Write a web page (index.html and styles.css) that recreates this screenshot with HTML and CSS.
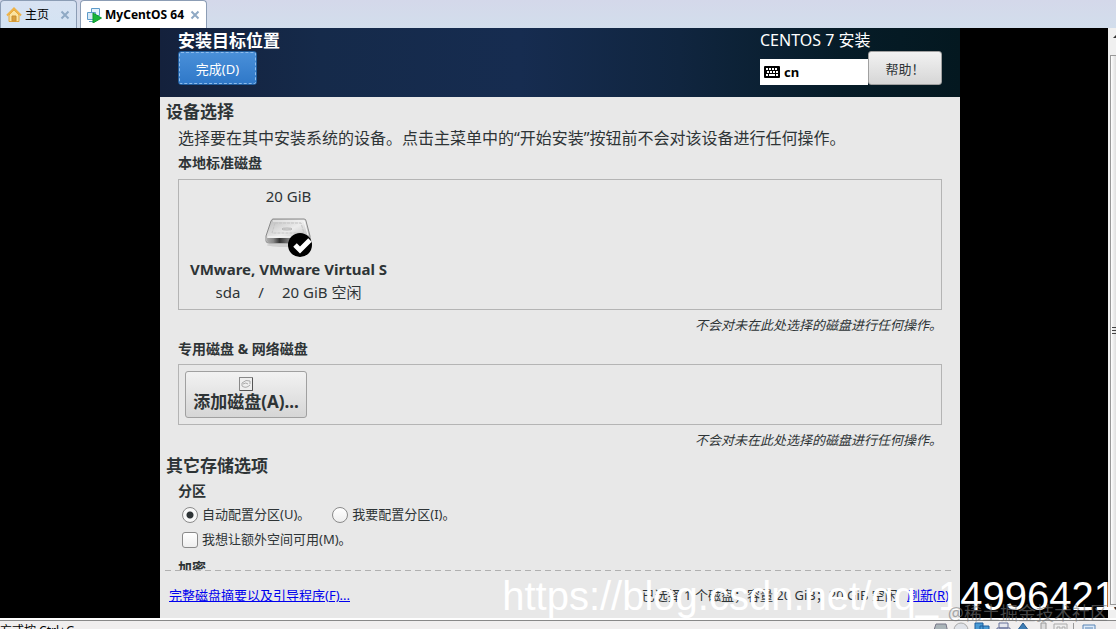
FILE: index.html
```html
<!DOCTYPE html>
<html lang="zh-CN">
  <head>
    <meta charset="UTF-8" />
    <title>MyCentOS 64</title>
    <link rel="stylesheet" href="styles.css">
  </head>
  <body>
    <nav class="tabs">
      <div class="tab">
        <svg class="tab-icon" width="16" height="16" viewBox="0 0 16 16">
          <path d="M3 8v6.500h10V8L8 3z" fill="#fbe3a0" stroke="#e0a63c" />
          <path d="M1 8.500 8 1.500l7 7" fill="none" stroke="#efb348" stroke-width="2" />
          <path d="M6 9h4v5H6z" fill="#d9a040" stroke="#c98f30" />
        </svg>
        <a class="tab-name" href="#home">主页</a>
        <button class="tab-close" aria-label="关闭">
          <svg width="10" height="10" viewBox="0 0 10 10"><path d="m1.500 1.500 7 7m0-7-7 7" stroke="#8fa9c4" stroke-width="2" /></svg>
        </button>
      </div>
      <div class="tab active">
        <svg class="tab-icon" width="16" height="16" viewBox="0 0 16 16">
          <path d="M5.500 1.500h8v7h-8z" fill="#e4f1fb" stroke="#5d9bc9" />
          <path d="M1.500 5.500h8v7h-8zM3 14.500h5" fill="#d5e9f8" stroke="#5d9bc9" />
          <path d="m7 6 8.500 5L7 16z" fill="#18b53a" stroke="#0d9a2c" />
        </svg>
        <a class="tab-name" href="#mycentos">MyCentOS 64</a>
        <button class="tab-close" aria-label="关闭">
          <svg width="10" height="10" viewBox="0 0 10 10"><path d="m1.500 1.500 7 7m0-7-7 7" stroke="#8fa9c4" stroke-width="2" /></svg>
        </button>
      </div>
    </nav>

    <div class="screen">
      <main class="installer">
        <header class="header">
          <div class="header-left">
            <h1>安装目标位置</h1>
            <button class="btn btn-done">完成(D)</button>
          </div>
          <div class="header-right">
            <p class="product">CENTOS 7 安装</p>
            <div class="header-tools">
              <button class="keyboard">
                <svg width="16" height="12" viewBox="0 0 16 12">
                  <rect width="16" height="12" rx="1" fill="#000" />
                  <path d="M2 3h12M3 6h11" stroke="#fff" stroke-width="2" stroke-dasharray="2 1" />
                  <path d="M2 9h2m1 0h6m1 0h2" stroke="#fff" stroke-width="2" />
                </svg>
                cn
              </button>
              <button class="btn btn-help">帮助！</button>
            </div>
          </div>
        </header>

        <div class="content">
          <h2>设备选择</h2>
          <div class="section">
            <p class="intro">选择要在其中安装系统的设备。点击主菜单中的“开始安装”按钮前不会对该设备进行任何操作。</p>
            <h3>本地标准磁盘</h3>
            <div class="disk-box">
              <div class="disk">
                <span class="disk-size">20 GiB</span>
                <svg width="48" height="48" viewBox="0 0 48 48">
                  <defs>
                    <linearGradient id="top" x1="0" y1="0" x2="1" y2="1">
                      <stop offset="0" stop-color="#b8b8b8" />
                      <stop offset="0.500" stop-color="#ececec" />
                      <stop offset="1" stop-color="#b0b0b0" />
                    </linearGradient>
                    <linearGradient id="front" x1="0" x2="1">
                      <stop offset="0" stop-color="#aaa" />
                      <stop offset="0.150" stop-color="#888" />
                      <stop offset="0.300" stop-color="#333" />
                      <stop offset="0.600" stop-color="#999" />
                      <stop offset="1" stop-color="#aaa" />
                    </linearGradient>
                  </defs>
                  <ellipse cx="23" cy="36" rx="21" ry="2" fill="#cfcfcf" />
                  <path d="M8 10h31q2 0 2 2l4 15v4q0 3-2 3H4q-3 0-3-2v-5l5-15q1-2 2-2z" fill="url(#top)" stroke="#888" />
                  <path d="M2 29h42v3q0 2-2 2H4q-2 0-2-2z" fill="url(#front)" />
                  <path d="M3 28h40M8 12h31l4 14" fill="none" stroke="#f8f8f8" />
                  <path d="M10 14h26l3 10H7z" fill="none" stroke="#c4c4c4" stroke-dasharray="3 1" />
                  <ellipse cx="22" cy="20" rx="5" ry="1" fill="#ddd" stroke="#b4b4b4" />
                  <circle cx="35" cy="36" r="12" fill="#000" />
                  <path d="m30 36 5 5 10-10" fill="none" stroke="#fff" stroke-width="5" />
                </svg>
                <strong class="disk-name">VMware, VMware Virtual S</strong>
                <div class="disk-info">
                  <span>sda</span>
                  <span>/</span>
                  <span>20 GiB 空闲</span>
                </div>
              </div>
            </div>
            <p class="note">不会对未在此处选择的磁盘进行任何操作。</p>
            <h3>专用磁盘 &amp; 网络磁盘</h3>
            <div class="disk-box special">
              <button class="btn btn-add">
                <svg width="14" height="14" viewBox="0 0 14 14">
                  <rect x="0.500" y="0.500" width="13" height="13" fill="#eee" stroke="#888" />
                  <path d="M1 13.500h12.500V1" fill="none" stroke="#555" />
                  <path d="M3 9V6q4-4 8-2v3M3 9q4 3 8-1M4 7q3-2 5 0" fill="none" stroke="#aaa" />
                </svg>
                添加磁盘(A)...
              </button>
            </div>
            <p class="note">不会对未在此处选择的磁盘进行任何操作。</p>
          </div>

          <h2>其它存储选项</h2>
          <div class="section">
            <h3 class="partition">分区</h3>
            <div class="options">
              <label><input type="radio" name="partition" checked />自动配置分区(U)。</label>
              <label><input type="radio" name="partition" />我要配置分区(I)。</label>
            </div>
            <div class="options">
              <label><input type="checkbox" />我想让额外空间可用(M)。</label>
            </div>
            <h3 class="encrypt">加密</h3>
          </div>
        </div>

        <footer class="footer">
          <a href="#summary">完整磁盘摘要以及引导程序(F)...</a>
          <p class="selected">已选择 1 个磁盘；容量 20 GiB；20 GiB 空闲 <a href="#refresh">刷新(R)</a></p>
        </footer>
      </main>
      <div class="scrollbar">
        <svg class="scroll-arrow" width="8" height="6" viewBox="0 0 8 6"><path d="m5 4 3-3v3z" fill="#333" /></svg>
        <div class="scroll-thumb">
          <svg width="4" height="9" viewBox="0 0 4 9"><path d="M0 1.500h4M0 4.500h4M0 7.500h4" stroke="#444" /></svg>
        </div>
        <svg class="scroll-arrow" width="8" height="6" viewBox="0 0 8 6"><path d="m5 1 3 3V1z" fill="#333" /></svg>
      </div>
    </div>

    <div class="statusbar">
      <span class="status-text">方式按 Ctrl+G。</span>
      <svg class="status-icons" width="184" height="16" viewBox="0 0 184 16">
        <path d="M4 3h10l2 9H1z" fill="#aab4b8" stroke="#778" />
        <circle cx="29" cy="9" r="7" fill="#dfe2e8" stroke="#aaa" />
        <path d="M43 2h8v8h-8zM48 5h9v9h-9z" fill="#4a9ad4" stroke="#1d5d9c" />
        <path d="M67 2h9v5h-9zM65 7h13v7H65z" fill="#e4e6ee" stroke="#667099" />
        <path d="m91 2 6 8H85z" fill="#3d7db5" stroke="#24598c" />
        <path d="M109 2h5v12h-5z" fill="#ddd" stroke="#999" />
        <path d="M122 3h13v10h-13zM125 6h3v3h-3zM130 6h3v3h-3z" fill="#eee" stroke="#aaa" />
        <path d="M141.500 2v14" stroke="#999" />
        <path d="M151 4h12v9h-12zM153 7h8" fill="#dbe9f8" stroke="#5a86b5" />
      </svg>
    </div>

    <div class="watermark">https://blog.csdn.net/qq_14996421</div>
    <div class="watermark-small">@稀土掘金技术社区</div>
  </body>
</html>
```

FILE: styles.css
```css
* {
  margin: 0;
  padding: 0;
  box-sizing: border-box;
}

body {
  font-family: "Noto Sans", "Noto Sans CJK SC", sans-serif;
  font-size: 13px;
  line-height: 20px;
  height: 100vh;
  display: flex;
  flex-direction: column;
  position: relative;
  overflow: hidden;
  background: #f0eeee;
  color: #2e3436;
}

button {
  font-family: inherit;
  color: #2e3436;
  cursor: pointer;
}

a {
  color: #0000ee;
}

.tabs {
  display: flex;
  gap: 3px;
  height: 28px;
  flex-shrink: 0;
  background: linear-gradient(#d4d8ea, #d2deec);
}

.tab {
  display: flex;
  align-items: center;
  padding: 0 6px 0 5px;
  border: 1px solid #8c9db5;
  border-bottom: none;
  border-radius: 4px 4px 0 0;
  background: linear-gradient(#d8e2f2, #d3e3f3);
}

.tab.active {
  background: white;
}

.tab-name {
  color: black;
  font-size: 12px;
  text-decoration: none;
  margin: 0 11px 0 3px;
}

.tab.active .tab-name {
  font-weight: bold;
  margin-right: 6px;
}

.tab-close {
  border: none;
  background: none;
  line-height: 0;
}

.screen {
  flex: 1;
  min-height: 0;
  display: flex;
  background: black;
}

.installer {
  flex: 1;
  min-width: 0;
  margin: 0 148px 0 160px;
  display: flex;
  flex-direction: column;
  background: #e8e8e8;
}

.header {
  display: flex;
  justify-content: space-between;
  flex-shrink: 0;
  height: 69px;
  padding: 2px 18px 0;
  background: linear-gradient(90deg, #14213c, #152a4a 20%, #162c50 45%, #10253f 65%, #061c28 85%, #041820);
  color: white;
}

.header h1 {
  font-size: 17px;
  line-height: 21px;
}

.product {
  font-size: 16px;
  line-height: 21px;
}

.header-right {
  width: 182px;
}

.header-tools {
  display: flex;
  align-items: flex-end;
}

.keyboard {
  display: flex;
  align-items: center;
  gap: 4px;
  flex: 1;
  height: 26px;
  padding: 0 4px;
  border: none;
  background: white;
  color: black;
  font-size: 13px;
  font-weight: bold;
}

.btn {
  border: 1px solid #a0a0a0;
  border-radius: 3px;
  background: linear-gradient(#f2f2f2, #d6d6d6);
}

.btn-done {
  width: 79px;
  height: 34px;
  border-color: #215d9c;
  background: linear-gradient(#4a90d9, #2f78c8);
  color: white;
  font-size: 13px;
  outline: 1px dashed #8fbcec;
  outline-offset: -2px;
}

.btn-help {
  width: 74px;
  height: 34px;
  font-size: 13px;
}

.content {
  flex: 1;
  min-height: 0;
  overflow: hidden;
  padding: 2px 18px 0 6px;
}

h2 {
  font-size: 17px;
  line-height: 25px;
}

.section {
  padding-left: 12px;
}

.intro {
  font-size: 16px;
  line-height: 28px;
}

h3 {
  font-size: 14px;
  line-height: 22px;
}

.disk-box {
  margin-top: 5px;
  padding: 6px 12px;
  border: 1px solid #b4b4b4;
}

.disk {
  width: 195px;
  display: flex;
  flex-direction: column;
  align-items: center;
  font-size: 15px;
  line-height: 22px;
}

.disk-size {
  line-height: 20px;
  margin-bottom: 3px;
}

.disk-name {
  white-space: nowrap;
  line-height: 24px;
}

.disk-info {
  display: flex;
  gap: 18px;
}

.note {
  font-size: 13px;
  font-style: italic;
  line-height: 30px;
  text-align: right;
  margin-bottom: -2px;
}

.special {
  margin-top: 4px;
  padding: 6px;
}

.btn-add {
  display: flex;
  flex-direction: column;
  align-items: center;
  width: 122px;
  height: 47px;
  padding-top: 5px;
  font-size: 17px;
  font-weight: bold;
  line-height: 22px;
}

.partition {
  margin-top: 2px;
}

.options {
  display: flex;
  gap: 22px;
  padding-left: 4px;
}

.options label {
  display: flex;
  align-items: center;
  gap: 4px;
  line-height: 25px;
}

.options input {
  appearance: none;
  width: 16px;
  height: 16px;
  border: 1px solid #8a8a8a;
  border-radius: 3px;
  background: linear-gradient(#fff, #eee);
}

.options input[type="radio"] {
  border-radius: 50%;
}

.options input[type="radio"]:checked {
  background: radial-gradient(circle, #2e3436 3px, #f8f8f8 4px);
}

.encrypt {
  margin-top: 5px;
}

.footer {
  display: flex;
  justify-content: space-between;
  align-items: center;
  flex-shrink: 0;
  height: 48px;
  margin: 0 5px;
  padding: 1px 6px 0 4px;
  background: repeating-linear-gradient(90deg, #b0b0b0 0, #b0b0b0 6px, #e8e8e8 6px, #e8e8e8 10px) top / 100% 1px no-repeat;
}

.selected a {
  margin-left: 6px;
}

.scrollbar {
  display: flex;
  flex-direction: column;
  width: 8px;
  padding: 6px 0;
  background: #f0f0f0;
}

.scroll-arrow {
  flex-shrink: 0;
}

.scroll-thumb {
  flex: 1;
  display: flex;
  align-items: center;
  justify-content: flex-end;
  margin: 15px 0 1px 2px;
  border: 1px solid #999;
  border-right: none;
  background: linear-gradient(90deg, #fff, #ddd);
}

.statusbar {
  display: flex;
  justify-content: space-between;
  flex-shrink: 0;
  height: 11px;
  padding-top: 3px;
  overflow: hidden;
  background: linear-gradient(#fff 2px, #888 2px, #888 3px, #f0eeee 3px);
}

.status-text {
  color: black;
  font-size: 12px;
}

.watermark {
  position: absolute;
  right: 0;
  bottom: 10px;
  font-family: "Liberation Sans", sans-serif;
  font-size: 40px;
  line-height: 46px;
  color: white;
  pointer-events: none;
}

.watermark-small {
  position: absolute;
  right: 8px;
  bottom: 4px;
  font-size: 18px;
  line-height: 24px;
  color: rgba(120, 120, 120, 0.6);
  pointer-events: none;
}
```
